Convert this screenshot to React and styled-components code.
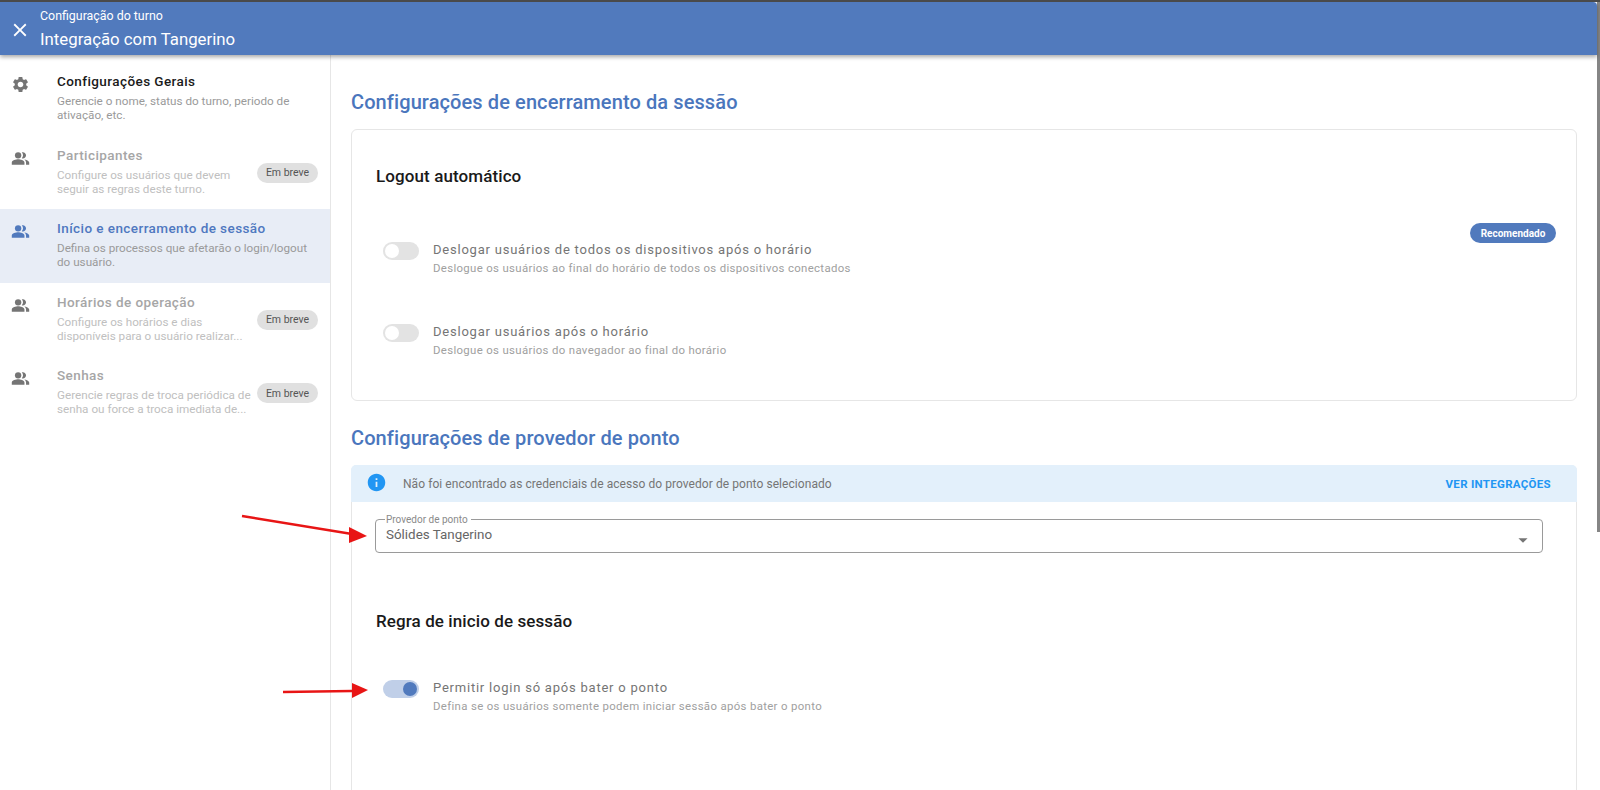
import React from "react";
import styled, { createGlobalStyle } from "styled-components";
import { MdSettings, MdPeopleAlt, MdClose, MdInfo, MdArrowDropDown } from "react-icons/md";

const Global = createGlobalStyle`
  html, body { margin: 0; padding: 0; height: 100%; overflow: hidden; background: #fff; }
  body { font-family: Roboto, "Liberation Sans", sans-serif; }
  * { box-sizing: border-box; }
`;

const Page = styled.div`
  position: relative;
  height: 790px;
  width: 1600px;
  overflow: hidden;
  display: flex;
  flex-direction: column;
  border-top: 2px solid #4a4a4a;
`;
const Frame = styled.div`
  flex: 1;
  display: flex;
  min-height: 0;
`;
const Window = styled.div`
  flex: 1;
  min-width: 0;
  display: flex;
  flex-direction: column;
`;
const ScrollTrack = styled.div`
  width: 3px;
  flex: none;
`;
const ScrollThumb = styled.div`
  height: 530px;
  background: #858585;
`;
const Header = styled.header`
  height: 53px;
  flex: none;
  background: #517abd;
  border-top-right-radius: 4px;
  box-shadow: 0 2px 4px rgba(0, 0, 0, 0.35);
  display: flex;
  align-items: center;
  color: #fff;
  position: relative;
  z-index: 2;
`;
const CloseSlot = styled.div`
  width: 40px;
  display: flex;
  justify-content: center;
  padding-top: 3px;
  font-size: 22px;
  flex: none;
`;
const HeaderTitles = styled.div`
  display: flex;
  flex-direction: column;
  gap: 7px;
  margin-top: 1px;
`;
const HeaderSmall = styled.div`
  font-size: 12.4px;
  line-height: 14px;
`;
const HeaderBig = styled.div`
  font-size: 16.8px;
  line-height: 19px;
  font-weight: 400;
`;
const Body = styled.div`
  flex: 1;
  min-height: 0;
  display: flex;
`;
const Sidebar = styled.nav`
  width: 331px;
  flex: none;
  border-right: 1px solid #e6e6e6;
  padding-top: 7px;
  display: flex;
  flex-direction: column;
`;
const Item = styled.div`
  height: 73.5px;
  display: flex;
  align-items: flex-start;
  padding: 9px 12px 0 0;
  background: ${p => (p.$active ? "#e8edf6" : "transparent")};
`;
const ItemIcon = styled.div`
  width: 57px;
  flex: none;
  padding: 4px 0 0 11px;
  font-size: 19px;
  line-height: 0;
  color: ${p => (p.$active ? "#517abd" : "#757575")};
`;
const ItemText = styled.div`
  flex: 1;
  min-width: 0;
`;
const ItemTitle = styled.div`
  font-size: 13.5px;
  line-height: 20px;
  font-weight: 500;
  letter-spacing: 0.42px;
  color: ${p => (p.$state === "active" ? "#4f78c0" : p.$state === "off" ? "#a6a6a6" : "#1a1a1a")};
`;
const ItemDesc = styled.div`
  font-size: 11.7px;
  line-height: 14px;
  margin-top: 3px;
  color: ${p => (p.$state === "off" ? "#c0c0c0" : "#9a9a9a")};
  width: ${p => (p.$state === "off" ? "196px" : "auto")};
`;
const SoonSlot = styled.div`
  align-self: stretch;
  display: flex;
  align-items: center;
  flex: none;
  padding-bottom: 8px;
`;
const Soon = styled.span`
  width: 61px;
  height: 20px;
  border-radius: 10px;
  background: #e0e0e0;
  color: #555;
  font-size: 10.5px;
  display: flex;
  align-items: center;
  justify-content: center;
`;
const Main = styled.main`
  flex: 1;
  min-width: 0;
  padding: 35px 20px 0 20px;
  overflow: hidden;
`;
const SectionTitle = styled.h2`
  margin: 0 0 ${p => p.$gap}px;
  font-size: 20px;
  line-height: 24px;
  font-weight: 500;
  letter-spacing: 0.1px;
  color: #4a76bd;
`;
const Card = styled.section`
  border: 1px solid #e6e6e6;
  border-radius: 6px;
  height: ${p => p.$height};
  margin-bottom: 25px;
  position: relative;
`;
const CardInner = styled.div`
  padding: ${p => p.$top}px 24px 0;
`;
const SubTitle = styled.h3`
  margin: 0 0 ${p => p.$gap}px;
  font-size: 17px;
  line-height: 20px;
  font-weight: 500;
  letter-spacing: 0.1px;
  color: #1a1a1a;
`;
const OptionRow = styled.div`
  display: flex;
  align-items: flex-start;
  padding-left: 7px;
  margin-bottom: ${p => p.$gap}px;
`;
const Track = styled.div`
  width: 36px;
  height: 18px;
  border-radius: 9px;
  background: ${p => (p.$on ? "#c0cfe8" : "#e3e3e3")};
  position: relative;
  flex: none;
  margin: 1px 14px 0 0;
`;
const Thumb = styled.div`
  position: absolute;
  top: 2px;
  left: ${p => (p.$on ? "20px" : "2px")};
  width: 14px;
  height: 14px;
  border-radius: 50%;
  background: ${p => (p.$on ? "#517abd" : "#fff")};
`;
const OptionLabel = styled.div`
  font-size: 13px;
  line-height: 18px;
  font-weight: 400;
  letter-spacing: 0.78px;
  color: #757575;
`;
const OptionHelp = styled.div`
  font-size: 11.4px;
  line-height: 16px;
  margin-top: 1px;
  letter-spacing: 0.34px;
  color: #a0a0a0;
`;
const Recommended = styled.span`
  position: absolute;
  top: 93px;
  right: 20px;
  width: 86px;
  height: 20px;
  border-radius: 10px;
  background: #517abd;
  color: #fff;
  font-size: 10px;
  font-weight: 700;
  display: flex;
  align-items: center;
  justify-content: center;
`;
const Alert = styled.div`
  height: 37px;
  background: #e3f0fb;
  border-radius: 5px 5px 0 0;
  display: flex;
  align-items: center;
  padding: 0 26px 0 15px;
  margin: -1px -1px 0;
`;
const AlertIcon = styled.div`
  font-size: 21px;
  line-height: 0;
  color: #2196f3;
  margin: -2px 16px 0 0;
`;
const AlertText = styled.div`
  flex: 1;
  font-size: 12px;
  letter-spacing: 0.06px;
  color: #757575;
`;
const AlertAction = styled.span`
  font-size: 11.5px;
  font-weight: 700;
  letter-spacing: 0.3px;
  color: #2196f3;
`;
const Fieldset = styled.fieldset`
  margin: 12px 33px 0 23px;
  height: 39px;
  padding: 0 9px;
  border: 1px solid #9a9a9a;
  border-radius: 4px;
  position: relative;
  display: block;
`;
const Legend = styled.legend`
  font-size: 10px;
  line-height: 11px;
  padding: 0 3px 0 1px;
  color: #8a8a8a;
`;
const SelectValue = styled.div`
  font-size: 13.4px;
  line-height: 18px;
  color: #666;
  margin: 1px 0 0 1px;
`;
const Caret = styled.div`
  position: absolute;
  right: 8px;
  top: 4px;
  font-size: 22px;
  line-height: 0;
  color: #757575;
`;
const Arrows = styled.svg`
  position: absolute;
  left: 0;
  top: -2px;
  pointer-events: none;
`;

const nav = [
  { Icon: MdSettings, state: "normal", title: "Configurações Gerais", desc: "Gerencie o nome, status do turno, periodo de ativação, etc." },
  { Icon: MdPeopleAlt, state: "off", title: "Participantes", desc: "Configure os usuários que devem seguir as regras deste turno.", soon: true },
  { Icon: MdPeopleAlt, state: "active", title: "Início e encerramento de sessão", desc: "Defina os processos que afetarão o login/logout do usuário." },
  { Icon: MdPeopleAlt, state: "off", title: "Horários de operação", desc: "Configure os horários e dias disponíveis para o usuário realizar...", soon: true },
  { Icon: MdPeopleAlt, state: "off", title: "Senhas", desc: "Gerencie regras de troca periódica de senha ou force a troca imediata de...", soon: true },
];

function Option({ on, label, help, gap }) {
  return (
    <OptionRow $gap={gap}>
      <Track $on={on}><Thumb $on={on} /></Track>
      <div>
        <OptionLabel>{label}</OptionLabel>
        <OptionHelp>{help}</OptionHelp>
      </div>
    </OptionRow>
  );
}

export default function App() {
  return (
    <Page>
      <Global />
      <Frame>
        <Window>
          <Header>
            <CloseSlot><MdClose /></CloseSlot>
            <HeaderTitles>
              <HeaderSmall>Configuração do turno</HeaderSmall>
              <HeaderBig>Integração com Tangerino</HeaderBig>
            </HeaderTitles>
          </Header>
          <Body>
            <Sidebar>
              {nav.map(({ Icon, state, title, desc, soon }) => (
                <Item key={title} $active={state === "active"}>
                  <ItemIcon $active={state === "active"}><Icon /></ItemIcon>
                  <ItemText>
                    <ItemTitle $state={state}>{title}</ItemTitle>
                    <ItemDesc $state={state}>{desc}</ItemDesc>
                  </ItemText>
                  {soon && <SoonSlot><Soon>Em breve</Soon></SoonSlot>}
                </Item>
              ))}
            </Sidebar>
            <Main>
              <SectionTitle $gap={15}>Configurações de encerramento da sessão</SectionTitle>
              <Card $height="272px">
                <CardInner $top={36}>
                  <SubTitle $gap={55}>Logout automático</SubTitle>
                  <Option gap={47} label="Deslogar usuários de todos os dispositivos após o horário" help="Deslogue os usuários ao final do horário de todos os dispositivos conectados" />
                  <Option gap={0} label="Deslogar usuários após o horário" help="Deslogue os usuários do navegador ao final do horário" />
                </CardInner>
                <Recommended>Recomendado</Recommended>
              </Card>
              <SectionTitle $gap={15}>Configurações de provedor de ponto</SectionTitle>
              <Card $height="420px">
                <Alert>
                  <AlertIcon><MdInfo /></AlertIcon>
                  <AlertText>Não foi encontrado as credenciais de acesso do provedor de ponto selecionado</AlertText>
                  <AlertAction>VER INTEGRAÇÕES</AlertAction>
                </Alert>
                <Fieldset>
                  <Legend>Provedor de ponto</Legend>
                  <SelectValue>Sólides Tangerino</SelectValue>
                  <Caret><MdArrowDropDown /></Caret>
                </Fieldset>
                <CardInner $top={58}>
                  <SubTitle $gap={48}>Regra de inicio de sessão</SubTitle>
                  <Option on gap={0} label="Permitir login só após bater o ponto" help="Defina se os usuários somente podem iniciar sessão após bater o ponto" />
                </CardInner>
              </Card>
            </Main>
          </Body>
        </Window>
        <ScrollTrack><ScrollThumb /></ScrollTrack>
      </Frame>
      <Arrows width="1600" height="790" viewBox="0 0 1600 790">
        <path d="M242 516 L352 534" stroke="#e81515" strokeWidth="2.4" fill="none" />
        <path d="M367 536 L349 543 L349 527 Z" fill="#e81515" />
        <path d="M283 692 L352 691" stroke="#e81515" strokeWidth="2.4" fill="none" />
        <path d="M368 690 L352 683 L352 698 Z" fill="#e81515" />
      </Arrows>
    </Page>
  );
}
